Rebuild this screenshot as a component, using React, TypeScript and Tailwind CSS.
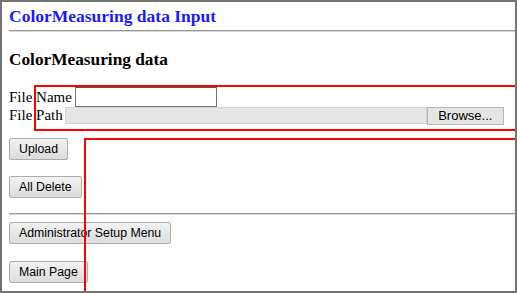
import React from "react";

const btn =
  "h-[22px] px-[9px] border border-[#adadad] rounded-[2px] bg-gradient-to-b from-[#f2f2f2] to-[#dcdcdc] text-[12.3px] text-black leading-none font-['Liberation_Sans',Arial,sans-serif]";

const App = () => {
  return (
    <div className="relative w-[517px] h-[293px] border-2 border-[#747474] bg-white overflow-hidden font-['Liberation_Serif','Times_New_Roman',serif] text-black">
      <div className="pl-[7px]">
        <h1 className="pt-[3px] text-[17.5px] font-bold leading-[22px] text-[#1a1aff]">
          ColorMeasuring data Input
        </h1>
        <hr className="mt-[3px] border-t border-b border-t-[#9a9a9a] border-b-[#d6d6d6]" />
        <h3 className="mt-[18px] text-[17.3px] font-bold leading-[20px]">ColorMeasuring data</h3>

        <div className="mt-[17px] flex items-center h-[20px] text-[15px] leading-none">
          <span>File Name</span>
          <input
            type="text"
            className="ml-[3px] w-[142px] h-[20px] border border-[#767676] border-t-[#555] bg-white"
          />
        </div>
        <div className="flex items-center h-[17px] text-[15px] leading-none">
          <span>File Path</span>
          <div className="ml-[2px] w-[362px] h-[17px] bg-[#e5e5e5] border border-[#d4d4d4]" />
          <button className="h-[18px] w-[77px] border border-[#b5b5b5] bg-[#e5e5e5] text-[13px] font-['Liberation_Sans',Arial,sans-serif] leading-none">
            Browse...
          </button>
        </div>

        <div className="mt-[14px] flex flex-col items-start">
          <button className={btn}>Upload</button>
          <button className={`${btn} mt-[16px]`}>All Delete</button>
        </div>
        <hr className="mt-[15px] border-t border-b border-t-[#9a9a9a] border-b-[#d6d6d6]" />
        <div className="mt-[7px] flex flex-col items-start">
          <button className={btn}>Administrator Setup Menu</button>
          <button className={`${btn} mt-[17px]`}>Main Page</button>
        </div>
      </div>

      {/* annotation boxes */}
      <div className="absolute left-[32px] top-[83px] w-[600px] h-[46px] border-2 border-[#ff0000] pointer-events-none" />
      <div className="absolute left-[82px] top-[136px] w-[600px] h-[300px] border-2 border-[#ff0000] pointer-events-none" />
    </div>
  );
};

export default App;
